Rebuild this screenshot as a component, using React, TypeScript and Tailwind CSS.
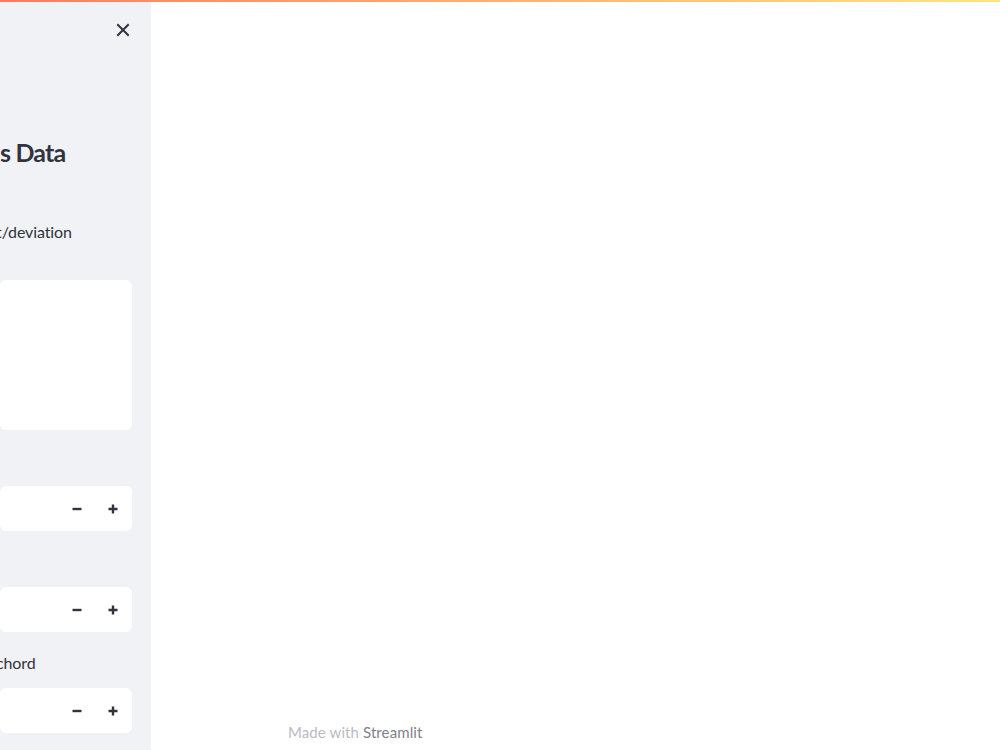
import React from "react";

const ink = "text-[#31333f]";

const CloseIcon = () => (
  <svg width="14" height="14" viewBox="0 0 14 14" fill="none" stroke="currentColor" strokeWidth="2" strokeLinecap="square">
    <path d="M2 2 L12 12 M12 2 L2 12" />
  </svg>
);

const MinusIcon = () => (
  <svg width="10" height="10" viewBox="0 0 10 10" fill="none" stroke="currentColor" strokeWidth="2.4">
    <path d="M0.5 5 H9.5" />
  </svg>
);

const PlusIcon = () => (
  <svg width="10" height="10" viewBox="0 0 10 10" fill="none" stroke="currentColor" strokeWidth="2.4">
    <path d="M0.5 5 H9.5 M5 0.5 V9.5" />
  </svg>
);

const NumberInput = ({ className = "" }: { className?: string }) => (
  <div className={`flex h-[45px] items-center justify-end rounded-md bg-white ${className}`}>
    <button className={`flex h-full w-[36px] items-center justify-center ${ink}`}>
      <MinusIcon />
    </button>
    <button className={`mr-px flex h-full w-[36px] items-center justify-center ${ink}`}>
      <PlusIcon />
    </button>
  </div>
);

export default function App() {
  return (
    <div className="relative h-[750px] w-[1000px] overflow-hidden bg-white font-['Lato','Open_Sans',sans-serif]">
      <div className="absolute inset-x-0 top-0 z-10 h-[2px] bg-gradient-to-r from-[#fc7a60] via-[#feb072] to-[#ffe47f]" />
      <div className="flex h-full">
        <aside className="flex w-[151px] shrink-0 flex-col overflow-hidden bg-[#f0f2f6] pr-[19px]">
          <div className="flex justify-end pr-[2px] pt-[23px]">
            <button className={ink}>
              <CloseIcon />
            </button>
          </div>
          <h2 className={`mt-[99px] whitespace-nowrap text-[25px] font-bold leading-[32px] tracking-[-0.8px] ${ink}`}>s Data</h2>
          <p className={`-ml-[4px] mt-[52px] whitespace-nowrap text-[16px] leading-[24px] tracking-[-0.1px] ${ink}`}>t/deviation</p>
          <div className="mt-[36px] h-[150px] rounded-md bg-white" />
          <NumberInput className="mt-[56px]" />
          <NumberInput className="mt-[56px]" />
          <p className={`-ml-[4px] mt-[19px] whitespace-nowrap text-[16px] leading-[24px] tracking-[-0.1px] ${ink}`}>chord</p>
          <NumberInput className="mt-[13px]" />
        </aside>
        <main className="flex flex-1 flex-col justify-end pb-[8px] pl-[137px]">
          <p className="text-[15px] leading-[20px] tracking-[0.1px] text-[#b9bcc4]">
            Made with <span className="text-[#7f828c]">Streamlit</span>
          </p>
        </main>
      </div>
    </div>
  );
}
